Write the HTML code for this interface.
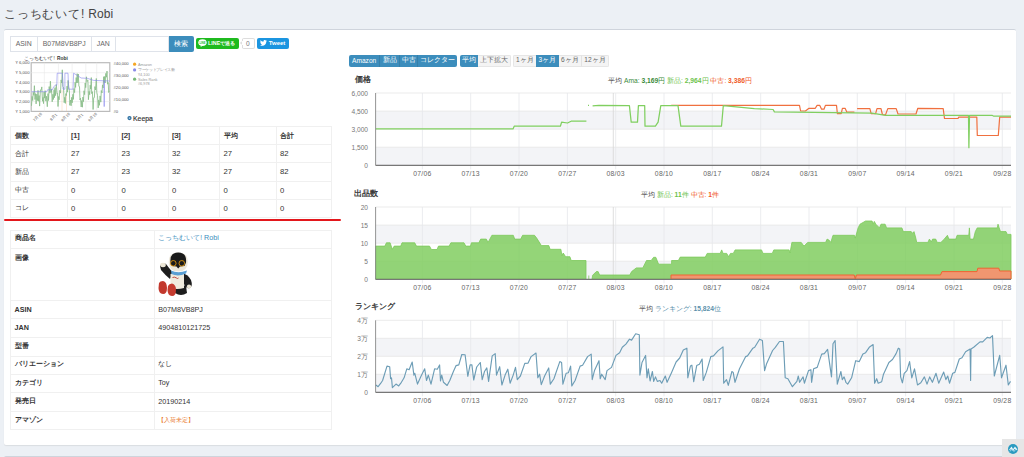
<!DOCTYPE html>
<html><head><meta charset="utf-8">
<style>
*{box-sizing:border-box}
html,body{margin:0;padding:0}
body{width:1024px;height:457px;overflow:hidden;position:relative;background:#ecf0f5;font-family:"Liberation Sans", sans-serif;color:#333}
.a{position:absolute}
.box{left:4px;top:28.8px;width:1012px;height:416.5px;background:#fff;border-top:1.4px solid #cfd4dc;border-radius:2px;box-shadow:0 1px 1px rgba(0,0,0,0.08)}
.ig{position:absolute;left:9.6px;top:35.6px;height:16.2px;display:flex;border:1px solid #dfe3ea;border-right:none;background:#fff}
.ig div{border-right:1px solid #dfe3ea;font-size:6.9px;color:#666;display:flex;align-items:center;justify-content:center;height:100%}
.btn{font-size:7px;display:flex;align-items:center;justify-content:center;white-space:nowrap}
.tb{border-collapse:collapse;position:absolute;font-size:7.7px;color:#333}
.j{font-size:6.6px}
.tb2{font-size:7.2px}
.tb2 td{padding-bottom:1.6px !important}
.tb td{border:1px solid #f0f0f0;padding:0 0 0 3.6px;vertical-align:middle;white-space:nowrap}
.bg{position:absolute;top:54.6px;height:12px;display:flex;border-radius:2px;overflow:hidden}
.bg div{font-size:6.6px;display:flex;align-items:center;justify-content:center;height:100%;white-space:nowrap}
.p{background:#3c8dbc;color:#fff;border-right:1px solid #367fa9}
.d{background:#f4f4f4;color:#666;border:1px solid #e6e6e6}
.ct{position:absolute;font-size:7.9px;font-weight:normal;color:#333;-webkit-text-stroke:0.3px #333;white-space:nowrap}
.sm{position:absolute;font-size:6.7px;color:#444;white-space:nowrap;text-align:center;left:580px;width:200px}
svg text{font-family:"Liberation Sans", sans-serif}
</style></head><body>
<div class="a" style="left:4.1px;top:6px;font-size:12px;color:#444;white-space:nowrap"><span style="letter-spacing:0.8px">こっちむいて!</span> Robi</div>
<div class="a box"></div>
<div class="a" style="left:4px;top:455.6px;width:1012px;height:10px;background:#fff;border-top:1.4px solid #cfd4dc;border-radius:2px"></div>
<div class="ig">
 <div style="width:27.2px">ASIN</div><div style="width:53.9px">B07M8VB8PJ</div><div style="width:24.3px">JAN</div><div style="width:53.2px"></div>
</div>
<div class="a btn" style="left:169px;top:35.6px;width:24.5px;height:16.2px;background:#3c8dbc;color:#fff;border-radius:0 2px 2px 0;font-size:7px">検索</div>
<div class="a btn" style="left:196px;top:38px;width:43px;height:10.5px;background:#1fba1f;color:#fff;border-radius:2px;font-size:5.4px;font-weight:bold;justify-content:flex-start;padding-left:1.8px"><svg width="9" height="8" viewBox="0 0 9 8" style="margin-right:1.2px"><ellipse cx="4.5" cy="3.6" rx="4.2" ry="3.4" fill="#fff"/><path d="M3 6.5 L2.6 8 L5 6.6Z" fill="#fff"/><text x="4.5" y="4.7" font-size="2.6" text-anchor="middle" fill="#1fba1f" font-weight="bold">LINE</text></svg>LINEで送る</div>
<div class="a" style="left:240.5px;top:40.8px;width:4px;height:4px;background:#fff;border-left:1px solid #ddd;border-bottom:1px solid #ddd;transform:rotate(45deg)"></div>
<div class="a btn" style="left:242px;top:38px;width:12.5px;height:10.5px;border:1px solid #ddd;border-left:none;border-radius:2px;color:#777;font-size:6.6px;background:#fff">0</div>
<div class="a" style="left:242px;top:38.5px;width:1px;height:2.5px;background:#ddd"></div>
<div class="a" style="left:242px;top:45px;width:1px;height:3px;background:#ddd"></div>
<div class="a btn" style="left:256.8px;top:38px;width:32px;height:10.6px;background:#1b95e0;color:#fff;border-radius:2px;font-size:6px;font-weight:bold"><svg width="7" height="6" viewBox="0 0 24 20" style="margin-right:1.5px"><path fill="#fff" d="M24 2.4c-.9.4-1.8.6-2.8.8 1-.6 1.8-1.6 2.2-2.7-1 .6-2 1-3.1 1.2C19.3.7 18 0 16.6 0c-2.7 0-4.9 2.2-4.9 4.9 0 .4 0 .8.1 1.1C7.7 5.8 4.1 3.9 1.7.9c-.4.7-.7 1.6-.7 2.5 0 1.7.9 3.2 2.2 4.1-.8 0-1.6-.2-2.2-.6v.1c0 2.4 1.7 4.4 3.9 4.8-.4.1-.8.2-1.3.2-.3 0-.6 0-.9-.1.6 2 2.4 3.4 4.6 3.4-1.7 1.3-3.8 2.1-6.1 2.1-.4 0-.8 0-1.2-.1 2.2 1.4 4.8 2.2 7.5 2.2 9.1 0 14-7.5 14-14v-.6c1-.7 1.8-1.6 2.5-2.5z"/></svg>Tweet</div>

<svg class="a" style="left:0;top:0" width="200" height="130" viewBox="0 0 200 130">
<rect x="31.2" y="62.7" width="78.6" height="48.7" fill="#fff" stroke="#bbb" stroke-width="1.2"/>
<line x1="31.2" y1="72.7" x2="109.8" y2="72.7" stroke="#e8e8e8" stroke-width="0.6"/>
<line x1="31.2" y1="82.6" x2="109.8" y2="82.6" stroke="#e8e8e8" stroke-width="0.6"/>
<line x1="31.2" y1="91.9" x2="109.8" y2="91.9" stroke="#e8e8e8" stroke-width="0.6"/>
<line x1="31.2" y1="101.6" x2="109.8" y2="101.6" stroke="#e8e8e8" stroke-width="0.6"/>
<line x1="44.3" y1="62.7" x2="44.3" y2="111.4" stroke="#e8e8e8" stroke-width="0.6"/>
<line x1="58.4" y1="62.7" x2="58.4" y2="111.4" stroke="#e8e8e8" stroke-width="0.6"/>
<line x1="72.1" y1="62.7" x2="72.1" y2="111.4" stroke="#e8e8e8" stroke-width="0.6"/>
<line x1="85.8" y1="62.7" x2="85.8" y2="111.4" stroke="#e8e8e8" stroke-width="0.6"/>
<line x1="96.7" y1="62.7" x2="96.7" y2="111.4" stroke="#e8e8e8" stroke-width="0.6"/>
<polyline points="31.5,105.8 32.1,96.4 32.7,100.5 33.2,92.3 33.9,95.3 34.4,85.7 35.0,99.5 35.6,93.6 36.1,103.9 36.8,94.1 37.5,100.6 38.0,90.4 38.6,101.2 39.1,95.6 39.6,106.1 40.4,89.9 41.1,90.5 41.8,86.9 42.5,101.2 43.0,97.4 43.5,103.6 44.1,92.0 44.6,98.1 45.2,90.7 45.8,101.1 46.5,96.3 47.3,106.7 48.0,93.6 48.5,100.5 49.2,86.6 49.9,93.2 50.4,81.2 51.0,92.3 51.5,89.4 52.2,101.8 52.9,94.3 53.4,99.5 54.1,89.7 54.5,97.6 55.0,87.6 55.6,95.6 56.3,84.6 57.1,93.7 57.5,93.2 58.0,106.5 58.6,96.5 59.1,99.8 59.8,90.3 60.5,93.1 61.1,79.9 61.7,83.0 62.3,69.8 62.9,86.6 63.5,87.1 64.2,102.7 64.7,97.3 65.4,103.4 65.8,93.6 66.4,95.8 67.1,86.1 67.5,92.1 68.1,80.4 68.7,86.3 69.4,90.8 69.8,105.3 70.6,100.0 71.1,105.8 71.7,97.3 72.2,102.8 72.9,94.3 73.4,99.4 73.9,88.6 74.6,92.6 75.1,82.3 75.6,87.4 76.2,77.6 76.7,83.0 77.2,73.7 77.8,82.8 78.3,74.0 78.9,86.4 79.5,86.6 80.0,100.0 80.5,98.2 81.2,107.0 81.7,100.5 82.4,107.2 82.9,97.1 83.5,101.6 84.0,90.8 84.6,94.6 85.2,83.0 85.7,87.6 86.4,76.8 87.1,81.6 87.9,80.2 88.4,99.7 89.1,91.4 89.7,94.7 90.2,85.2 90.7,89.0 91.3,77.6 91.7,93.6 92.4,91.7 93.1,109.5 93.7,97.7 94.4,97.5 94.9,86.6 95.5,90.0 96.3,78.5 96.8,92.6 97.5,95.3 98.2,107.9 98.7,99.9 99.4,105.3 100.1,95.9 100.8,102.1 101.3,90.5 102.0,93.0 102.5,84.9 103.1,88.0 103.7,76.7 104.1,82.4 104.6,76.5 105.1,83.0 105.8,73.4 106.4,77.2 107.0,71.1 107.6,84.2 108.2,82.5 108.7,92.5 109.3,90.9" fill="none" stroke="#8abd8a" stroke-width="1.0" opacity="0.85"/>
<line x1="62" y1="90" x2="62" y2="111" stroke="#f8c89a" stroke-width="0.4"/><line x1="66.5" y1="95" x2="66.5" y2="111" stroke="#f8c89a" stroke-width="0.4"/>
<polyline points="31.5,91.7 46.8,91.7 47.5,89.8 52.4,89.8 53.7,86.7 55.5,85.2 56.8,85.2 57.2,73.2 62.4,73.2 63.0,89.2 64.9,89.2 64.9,73.2 68.0,73.2 68.6,89.2 73.0,89.2 73.6,73.2 77.4,75.5 81.1,78.0 87.3,78.3 93.6,80.4 104.0,80.8 104.2,106.6 104.5,80.8 109.5,81.0" fill="none" stroke="#8585ec" stroke-width="0.8" opacity="0.75"/>
<text x="23.7" y="59.6" font-size="4.5" fill="#333" textLength="31" lengthAdjust="spacing">こっちむいて!</text><text x="57" y="59.6" font-size="4.7" fill="#333" font-weight="bold" textLength="10.8" lengthAdjust="spacingAndGlyphs">Robi</text>
<text x="29.5" y="64.2" text-anchor="end" font-size="4.2" fill="#555">¥ 6,000</text>
<text x="29.5" y="74.2" text-anchor="end" font-size="4.2" fill="#555">¥ 5,000</text>
<text x="29.5" y="84.1" text-anchor="end" font-size="4.2" fill="#555">¥ 4,000</text>
<text x="29.5" y="93.4" text-anchor="end" font-size="4.2" fill="#555">¥ 3,000</text>
<text x="29.5" y="103.1" text-anchor="end" font-size="4.2" fill="#555">¥ 2,000</text>
<text x="29.5" y="112.9" text-anchor="end" font-size="4.2" fill="#555">¥ 1,000</text>
<text x="113.5" y="64.5" font-size="4.2" fill="#555">#40,000</text>
<text x="113.5" y="76.5" font-size="4.2" fill="#555">#30,000</text>
<text x="113.5" y="88.5" font-size="4.2" fill="#555">#20,000</text>
<text x="113.5" y="100.8" font-size="4.2" fill="#555">#10,000</text>
<text x="113.5" y="112.8" font-size="4.2" fill="#555">#0</text>
<circle cx="134.6" cy="64.2" r="1.6" fill="#f5a623"/>
<circle cx="134.6" cy="69.9" r="1.6" fill="#8a8ae8"/>
<circle cx="134.6" cy="79.2" r="1.6" fill="#7ab87a"/>
<text x="138" y="65.6" font-size="3.8" fill="#999">Amazon</text>
<text x="138" y="71.3" font-size="3.6" fill="#999" textLength="37" lengthAdjust="spacing">マーケットプレイス新</text>
<text x="138" y="75.6" font-size="3.8" fill="#999">¥4,100</text>
<text x="138" y="80.6" font-size="3.8" fill="#999">Sales Rank</text>
<text x="138" y="85.2" font-size="3.8" fill="#999">#6,978</text>
<text x="38.5" y="118" font-size="3.8" fill="#555" text-anchor="middle" transform="rotate(-45 38.5 118)">7月16</text>
<text x="54.5" y="118" font-size="3.8" fill="#555" text-anchor="middle" transform="rotate(-45 54.5 118)">8月1</text>
<text x="66.5" y="118" font-size="3.8" fill="#555" text-anchor="middle" transform="rotate(-45 66.5 118)">8月16</text>
<text x="80.5" y="118" font-size="3.8" fill="#555" text-anchor="middle" transform="rotate(-45 80.5 118)">9月1</text>
<text x="93.5" y="118" font-size="3.8" fill="#555" text-anchor="middle" transform="rotate(-45 93.5 118)">9月16</text>
<circle cx="129.5" cy="118.1" r="2.1" fill="#2b6d9e"/><circle cx="129.5" cy="118.1" r="0.9" fill="#9cc6e6"/>
<text x="133" y="120.6" font-size="6.9" fill="#333" stroke="#333" stroke-width="0.15">Keepa</text>
</svg>

<table class="tb" style="left:10px;top:126px;width:322px;height:92px">
<tr style="color:#222;-webkit-text-stroke:0.2px #222"><td style="width:56.5px"><span class="j">個数</span></td><td style="width:50.5px">[1]</td><td style="width:50.5px">[2]</td><td style="width:51.5px">[3]</td><td style="width:56.5px"><span class="j">平均</span></td><td><span class="j">合計</span></td></tr>
<tr><td><span class="j">合計</span></td><td>27</td><td>23</td><td>32</td><td>27</td><td>82</td></tr>
<tr><td><span class="j">新品</span></td><td>27</td><td>23</td><td>32</td><td>27</td><td>82</td></tr>
<tr><td><span class="j">中古</span></td><td>0</td><td>0</td><td>0</td><td>0</td><td>0</td></tr>
<tr><td><span class="j">コレ</span></td><td>0</td><td>0</td><td>0</td><td>0</td><td>0</td></tr>
</table>
<div class="a" style="left:3.5px;top:219px;width:337px;height:2.4px;background:#e3171c;border-radius:2px"></div>

<table class="tb tb2" style="left:10px;top:229.5px;width:322px">
<tr style="height:18.5px"><td style="width:143.6px;font-weight:bold"><span class="j">商品名</span></td><td style="color:#3c8dbc"><span class="j">こっちむいて!</span> Robi</td></tr>
<tr style="height:52.3px"><td style="font-weight:bold;vertical-align:top;padding-top:4px"><span class="j">画像</span></td><td></td></tr>
<tr style="height:18.1px"><td style="font-weight:bold">ASIN</td><td>B07M8VB8PJ</td></tr>
<tr style="height:18.3px"><td style="font-weight:bold">JAN</td><td>4904810121725</td></tr>
<tr style="height:18.9px"><td style="font-weight:bold"><span class="j">型番</span></td><td></td></tr>
<tr style="height:18.4px"><td style="font-weight:bold"><span class="j">バリエーション</span></td><td><span class="j">なし</span></td></tr>
<tr style="height:18.5px"><td style="font-weight:bold"><span class="j">カテゴリ</span></td><td>Toy</td></tr>
<tr style="height:18.4px"><td style="font-weight:bold"><span class="j">発売日</span></td><td>20190214</td></tr>
<tr style="height:18.4px"><td style="font-weight:bold"><span class="j">アマゾン</span></td><td style="color:#e8731e"><span class="j" style="font-size:6.2px">【入荷未定】</span></td></tr>
</table>
<svg class="a" style="left:155px;top:248px" width="42" height="50" viewBox="155 248 42 50">
<path d="M181 273 Q188 274 191 280 Q193 286 190 288 Q186 289 184 284 Z" fill="#1d1d1d"/>
<ellipse cx="189" cy="286.5" rx="2.2" ry="2" fill="#ece6d6"/>
<path d="M160 266 Q162 262 166 264 L173 273 L170 279 Q166 276 161 270 Z" fill="#1d1d1d"/>
<ellipse cx="163" cy="265" rx="2.8" ry="2.2" fill="#ece6d6"/>
<path d="M174 285 Q180 283 186 286 L187 293 Q181 297 175 293 Z" fill="#1d1d1d"/>
<path d="M170.5 274 Q177 271 184 274 L184 288 Q177 290 170.5 288 Z" fill="#f0ebde"/>
<path d="M171 270.5 Q178 274 187 270.5 L186 273.5 Q178 277 171.5 274 Z" fill="#5a9fd3"/>
<path d="M172.5 277.5 q2 -1 4 0.5 q1 1 2 0" stroke="#b8352c" stroke-width="0.9" fill="none"/>
<path d="M168.7 262 Q168.7 252.4 178.2 252.4 Q187.8 252.4 187.8 262 Q187.8 271.5 178.2 271.5 Q168.7 271.5 168.7 262 Z" fill="#ece7da"/>
<path d="M170.5 262.5 Q169.5 252.4 178.2 252.4 Q187 252.4 186 262.5 L184.5 266 L180 266.5 L178.2 268.5 L176.5 266.5 L172 266 Z" fill="#1a1a1a"/>
<circle cx="173.3" cy="263.3" r="2.8" fill="#1a1a1a" stroke="#f2a20e" stroke-width="0.8"/>
<circle cx="181.8" cy="263.3" r="2.8" fill="#1a1a1a" stroke="#f2a20e" stroke-width="0.8"/>
<path d="M159 283 Q160 281 163 281 Q167 282 167 288 Q167 294 163 294 Q158.5 293.5 158.5 288 Z" fill="#c2382d"/>
<path d="M168 286 Q169 283.5 172 283.5 Q176 284.5 176 290 Q176 296 172 296 Q167.5 295.5 167.5 290 Z" fill="#c53b2f"/>
</svg>

<div class="bg" style="left:349px;width:108px">
 <div class="p" style="width:31.3px">Amazon</div><div class="p" style="width:19.5px">新品</div><div class="p" style="width:18.6px">中古</div><div class="p" style="width:38.6px;border-right:none">コレクター</div>
</div>
<div class="bg" style="left:459.5px;width:51.1px">
 <div class="p" style="width:18.6px;border-right:none">平均</div><div class="d" style="width:32.5px;border-left:none">上下拡大</div>
</div>
<div class="bg" style="left:513.3px;width:95.6px">
 <div class="d" style="width:22.3px;border-right:none">1ヶ月</div><div class="p" style="width:23.3px;border-right:none">3ヶ月</div><div class="d" style="width:22.1px;border-right:none;border-left:none">6ヶ月</div><div class="d" style="width:27.9px;border-left:1px solid #e2e2e2">12ヶ月</div>
</div>

<div class="ct" style="left:354.8px;top:74px">価格</div>
<div class="ct" style="left:354.2px;top:187.6px">出品数</div>
<div class="ct" style="left:354.8px;top:301.2px">ランキング</div>
<div class="sm" style="top:77px">平均 <span style="color:#3a8a3a">Ama: <b>3,169</b>円</span> <span style="color:#6cc24a">新品: <b>2,964</b>円</span> <span style="color:#f05a28">中古: <b>3,386</b>円</span></div>
<div class="sm" style="top:191px">平均 <span style="color:#6cc24a">新品: <b>11</b>件</span> <span style="color:#f05a28">中古: <b>1</b>件</span></div>
<div class="sm" style="top:304.6px">平均 <span style="color:#5b90ab">ランキング: <b>15,824</b>位</span></div>

<svg class="a" style="left:0;top:0" width="1024" height="457" viewBox="0 0 1024 457">
<rect x="375.6" y="111.1" width="635.4" height="18.05000000000001" fill="#f3f4f7"/>
<rect x="375.6" y="147.2" width="635.4" height="18.100000000000023" fill="#f3f4f7"/>
<line x1="375.6" y1="93.0" x2="1011.0" y2="93.0" stroke="#e6e6e6" stroke-width="0.8"/>
<text x="368" y="95.8" text-anchor="end" font-size="6.6" fill="#777">6,000</text>
<line x1="375.6" y1="111.1" x2="1011.0" y2="111.1" stroke="#e6e6e6" stroke-width="0.8"/>
<text x="368" y="113.9" text-anchor="end" font-size="6.6" fill="#777">4,500</text>
<line x1="375.6" y1="129.2" x2="1011.0" y2="129.2" stroke="#e6e6e6" stroke-width="0.8"/>
<text x="368" y="132.0" text-anchor="end" font-size="6.6" fill="#777">3,000</text>
<line x1="375.6" y1="147.2" x2="1011.0" y2="147.2" stroke="#e6e6e6" stroke-width="0.8"/>
<text x="368" y="150.0" text-anchor="end" font-size="6.6" fill="#777">1,500</text>
<line x1="375.6" y1="165.3" x2="1011.0" y2="165.3" stroke="#e6e6e6" stroke-width="0.8"/>
<text x="368" y="168.1" text-anchor="end" font-size="6.6" fill="#777">0</text>
<line x1="422.4" y1="93.0" x2="422.4" y2="169.3" stroke="#e6e7eb" stroke-width="0.8"/>
<text x="422.4" y="175.8" text-anchor="middle" font-size="6.8" fill="#666" letter-spacing="0.25">07/06</text>
<line x1="470.7" y1="93.0" x2="470.7" y2="169.3" stroke="#e6e7eb" stroke-width="0.8"/>
<text x="470.7" y="175.8" text-anchor="middle" font-size="6.8" fill="#666" letter-spacing="0.25">07/13</text>
<line x1="519.0" y1="93.0" x2="519.0" y2="169.3" stroke="#e6e7eb" stroke-width="0.8"/>
<text x="519.0" y="175.8" text-anchor="middle" font-size="6.8" fill="#666" letter-spacing="0.25">07/20</text>
<line x1="567.4" y1="93.0" x2="567.4" y2="169.3" stroke="#e6e7eb" stroke-width="0.8"/>
<text x="567.4" y="175.8" text-anchor="middle" font-size="6.8" fill="#666" letter-spacing="0.25">07/27</text>
<line x1="615.7" y1="93.0" x2="615.7" y2="169.3" stroke="#e6e7eb" stroke-width="0.8"/>
<text x="615.7" y="175.8" text-anchor="middle" font-size="6.8" fill="#666" letter-spacing="0.25">08/03</text>
<line x1="664.0" y1="93.0" x2="664.0" y2="169.3" stroke="#e6e7eb" stroke-width="0.8"/>
<text x="664.0" y="175.8" text-anchor="middle" font-size="6.8" fill="#666" letter-spacing="0.25">08/10</text>
<line x1="712.3" y1="93.0" x2="712.3" y2="169.3" stroke="#e6e7eb" stroke-width="0.8"/>
<text x="712.3" y="175.8" text-anchor="middle" font-size="6.8" fill="#666" letter-spacing="0.25">08/17</text>
<line x1="760.7" y1="93.0" x2="760.7" y2="169.3" stroke="#e6e7eb" stroke-width="0.8"/>
<text x="760.7" y="175.8" text-anchor="middle" font-size="6.8" fill="#666" letter-spacing="0.25">08/24</text>
<line x1="809.0" y1="93.0" x2="809.0" y2="169.3" stroke="#e6e7eb" stroke-width="0.8"/>
<text x="809.0" y="175.8" text-anchor="middle" font-size="6.8" fill="#666" letter-spacing="0.25">08/31</text>
<line x1="857.3" y1="93.0" x2="857.3" y2="169.3" stroke="#e6e7eb" stroke-width="0.8"/>
<text x="857.3" y="175.8" text-anchor="middle" font-size="6.8" fill="#666" letter-spacing="0.25">09/07</text>
<line x1="905.6" y1="93.0" x2="905.6" y2="169.3" stroke="#e6e7eb" stroke-width="0.8"/>
<text x="905.6" y="175.8" text-anchor="middle" font-size="6.8" fill="#666" letter-spacing="0.25">09/14</text>
<line x1="954.0" y1="93.0" x2="954.0" y2="169.3" stroke="#e6e7eb" stroke-width="0.8"/>
<text x="954.0" y="175.8" text-anchor="middle" font-size="6.8" fill="#666" letter-spacing="0.25">09/21</text>
<line x1="1002.3" y1="93.0" x2="1002.3" y2="169.3" stroke="#e6e7eb" stroke-width="0.8"/>
<text x="1002.3" y="175.8" text-anchor="middle" font-size="6.8" fill="#666" letter-spacing="0.25">09/28</text>
<line x1="613.3" y1="93.0" x2="613.3" y2="165.3" stroke="#d6d6d6" stroke-width="0.8"/>
<polyline points="671.2,105.4 799.5,105.4 800.6,111.0 805.4,111.0 809.0,108.3 815.3,108.3 817.1,105.4 819.8,105.4 821.6,109.2 824.0,109.2 825.4,105.4 836.5,105.4 837.4,113.7 841.2,113.7 842.4,108.3 845.1,108.3 846.9,112.2 854.4,112.2" fill="none" stroke="#f0703f" stroke-width="1.2" stroke-linejoin="round"/>
<polyline points="857.1,108.6 869.9,108.6 871.1,113.7 875.6,113.7 877.0,108.6 881.0,108.6 882.4,114.5 885.5,114.9 887.8,108.6 896.2,108.6 898.0,114.0 916.0,114.0 917.8,108.3 943.2,108.6 944.5,118.5 958.0,118.5 958.8,117.1 976.8,117.1 977.3,135.5 998.3,135.5 999.7,117.1 1011.0,117.1" fill="none" stroke="#f0703f" stroke-width="1.2" stroke-linejoin="round"/>
<polyline points="375.6,128.9 513.0,128.9 514.2,126.2 560.4,126.2 561.6,122.1 567.5,123.0 571.1,121.2 586.4,121.2" fill="none" stroke="#80cf60" stroke-width="1.25" stroke-linejoin="round"/>
<polyline points="588.0,105.4 589.0,105.4" fill="none" stroke="#80cf60" stroke-width="1.25" stroke-linejoin="round"/>
<polyline points="592.6,105.9 598.9,105.4 629.4,105.6 631.2,122.1 637.5,122.1 638.4,105.6 644.7,105.6 645.0,126.2 655.4,126.2 658.1,122.1 660.8,105.6 678.0,105.6 680.8,126.2 721.5,126.2 723.3,105.6 754.3,108.6 773.1,109.5 774.4,111.9 872.0,113.1 885.5,115.3 968.5,115.3 968.9,147.7 969.5,115.3 992.0,115.3 993.8,116.2 1011.0,116.2" fill="none" stroke="#80cf60" stroke-width="1.25" stroke-linejoin="round"/>
<line x1="375.6" y1="93.0" x2="375.6" y2="165.3" stroke="#888" stroke-width="0.9"/>
<line x1="375.6" y1="165.3" x2="1011.0" y2="165.3" stroke="#777" stroke-width="1.3"/>
<rect x="375.6" y="225.1" width="635.4" height="18.05000000000001" fill="#f3f4f7"/>
<rect x="375.6" y="261.2" width="635.4" height="18.100000000000023" fill="#f3f4f7"/>
<line x1="375.6" y1="207.0" x2="1011.0" y2="207.0" stroke="#e6e6e6" stroke-width="0.8"/>
<text x="368" y="209.8" text-anchor="end" font-size="6.6" fill="#777">20</text>
<line x1="375.6" y1="225.1" x2="1011.0" y2="225.1" stroke="#e6e6e6" stroke-width="0.8"/>
<text x="368" y="227.9" text-anchor="end" font-size="6.6" fill="#777">15</text>
<line x1="375.6" y1="243.2" x2="1011.0" y2="243.2" stroke="#e6e6e6" stroke-width="0.8"/>
<text x="368" y="246.0" text-anchor="end" font-size="6.6" fill="#777">10</text>
<line x1="375.6" y1="261.2" x2="1011.0" y2="261.2" stroke="#e6e6e6" stroke-width="0.8"/>
<text x="368" y="264.0" text-anchor="end" font-size="6.6" fill="#777">5</text>
<line x1="375.6" y1="279.3" x2="1011.0" y2="279.3" stroke="#e6e6e6" stroke-width="0.8"/>
<text x="368" y="282.1" text-anchor="end" font-size="6.6" fill="#777">0</text>
<line x1="422.4" y1="207.0" x2="422.4" y2="283.3" stroke="#e6e7eb" stroke-width="0.8"/>
<text x="422.4" y="289.8" text-anchor="middle" font-size="6.8" fill="#666" letter-spacing="0.25">07/06</text>
<line x1="470.7" y1="207.0" x2="470.7" y2="283.3" stroke="#e6e7eb" stroke-width="0.8"/>
<text x="470.7" y="289.8" text-anchor="middle" font-size="6.8" fill="#666" letter-spacing="0.25">07/13</text>
<line x1="519.0" y1="207.0" x2="519.0" y2="283.3" stroke="#e6e7eb" stroke-width="0.8"/>
<text x="519.0" y="289.8" text-anchor="middle" font-size="6.8" fill="#666" letter-spacing="0.25">07/20</text>
<line x1="567.4" y1="207.0" x2="567.4" y2="283.3" stroke="#e6e7eb" stroke-width="0.8"/>
<text x="567.4" y="289.8" text-anchor="middle" font-size="6.8" fill="#666" letter-spacing="0.25">07/27</text>
<line x1="615.7" y1="207.0" x2="615.7" y2="283.3" stroke="#e6e7eb" stroke-width="0.8"/>
<text x="615.7" y="289.8" text-anchor="middle" font-size="6.8" fill="#666" letter-spacing="0.25">08/03</text>
<line x1="664.0" y1="207.0" x2="664.0" y2="283.3" stroke="#e6e7eb" stroke-width="0.8"/>
<text x="664.0" y="289.8" text-anchor="middle" font-size="6.8" fill="#666" letter-spacing="0.25">08/10</text>
<line x1="712.3" y1="207.0" x2="712.3" y2="283.3" stroke="#e6e7eb" stroke-width="0.8"/>
<text x="712.3" y="289.8" text-anchor="middle" font-size="6.8" fill="#666" letter-spacing="0.25">08/17</text>
<line x1="760.7" y1="207.0" x2="760.7" y2="283.3" stroke="#e6e7eb" stroke-width="0.8"/>
<text x="760.7" y="289.8" text-anchor="middle" font-size="6.8" fill="#666" letter-spacing="0.25">08/24</text>
<line x1="809.0" y1="207.0" x2="809.0" y2="283.3" stroke="#e6e7eb" stroke-width="0.8"/>
<text x="809.0" y="289.8" text-anchor="middle" font-size="6.8" fill="#666" letter-spacing="0.25">08/31</text>
<line x1="857.3" y1="207.0" x2="857.3" y2="283.3" stroke="#e6e7eb" stroke-width="0.8"/>
<text x="857.3" y="289.8" text-anchor="middle" font-size="6.8" fill="#666" letter-spacing="0.25">09/07</text>
<line x1="905.6" y1="207.0" x2="905.6" y2="283.3" stroke="#e6e7eb" stroke-width="0.8"/>
<text x="905.6" y="289.8" text-anchor="middle" font-size="6.8" fill="#666" letter-spacing="0.25">09/14</text>
<line x1="954.0" y1="207.0" x2="954.0" y2="283.3" stroke="#e6e7eb" stroke-width="0.8"/>
<text x="954.0" y="289.8" text-anchor="middle" font-size="6.8" fill="#666" letter-spacing="0.25">09/21</text>
<line x1="1002.3" y1="207.0" x2="1002.3" y2="283.3" stroke="#e6e7eb" stroke-width="0.8"/>
<text x="1002.3" y="289.8" text-anchor="middle" font-size="6.8" fill="#666" letter-spacing="0.25">09/28</text>
<line x1="613.3" y1="207.0" x2="613.3" y2="279.3" stroke="#d6d6d6" stroke-width="0.8"/>
<polygon points="375.6,246.1 384.9,246.1 386.4,242.8 390.1,242.8 392.3,249.3 394.2,246.1 400.7,246.1 402.0,242.8 414.7,242.8 416.5,246.1 429.5,246.1 431.4,249.5 437.0,249.5 438.5,246.1 449.1,246.1 450.9,242.8 464.0,242.8 465.8,246.1 470.5,246.1 471.4,242.8 478.8,242.8 480.7,239.1 486.3,239.1 488.1,242.4 491.9,235.3 513.3,235.3 514.7,239.1 520.7,239.1 522.6,235.3 534.5,235.3 536.7,238.1 541.4,245.6 548.8,245.6 550.1,249.3 560.9,249.3 561.9,255.8 563.2,253.0 565.6,256.7 569.9,256.7 571.2,260.5 586.0,260.5 586.0,279.1 375.6,279.1" fill="#7ccc5a" fill-opacity="0.82" stroke="#7cc95a" stroke-width="0.8"/>
<polygon points="592.0,279.1 592.6,275.3 596.3,271.6 598.1,271.6 599.6,275.0 629.8,275.0 631.6,271.6 636.3,267.9 642.8,267.9 646.5,260.5 651.2,260.5 653.6,257.3 655.8,257.3 658.6,264.2 671.6,264.2 671.6,260.5 678.4,260.5 680.2,257.1 705.3,257.1 707.2,253.4 720.2,253.4 721.7,249.9 723.0,253.4 726.7,253.4 728.6,256.7 730.5,253.4 733.3,253.4 735.1,249.9 761.5,249.9 763.0,253.4 772.3,253.4 773.8,249.9 789.1,249.9 790.0,253.0 791.9,242.4 801.2,242.4 804.0,246.1 807.7,242.4 825.6,242.4 827.1,239.1 828.9,240.0 830.8,242.4 833.0,235.3 854.4,235.3 855.3,238.1 858.1,227.9 860.0,224.2 865.6,221.0 872.1,221.0 873.0,224.2 874.3,221.4 875.8,224.2 879.5,227.9 881.0,224.2 885.1,224.2 886.6,227.9 901.9,227.9 903.3,231.6 911.2,231.6 913.0,233.5 914.0,231.6 915.8,238.1 916.7,242.4 927.9,242.4 929.4,239.1 931.3,241.9 932.6,239.1 935.7,239.1 937.2,242.4 940.9,242.4 944.3,239.1 947.4,235.3 948.9,239.1 955.8,239.1 957.1,235.3 968.8,235.3 969.4,227.9 970.1,239.1 973.5,239.1 975.3,231.6 977.2,227.9 997.3,227.9 998.0,224.2 999.2,227.9 1000.5,231.6 1006.0,231.6 1007.3,234.4 1011.0,234.4 1011.0,279.1" fill="#7ccc5a" fill-opacity="0.82" stroke="#7cc95a" stroke-width="0.8"/>
<line x1="588.8" y1="275.5" x2="588.8" y2="279" stroke="#7cc95a" stroke-width="0.8"/>
<polygon points="671.0,279.1 671.0,275.0 854.2,275.0 855.3,279.0 856.4,275.0 940.5,275.0 942.0,271.6 977.0,271.6 977.8,268.2 998.8,268.2 999.6,271.0 1011.0,271.0 1011.0,279.1" fill="#f39470" fill-opacity="0.97" stroke="#f06432" stroke-width="1.0"/>
<line x1="375.6" y1="207.0" x2="375.6" y2="279.3" stroke="#888" stroke-width="0.9"/>
<line x1="375.6" y1="279.3" x2="1011.0" y2="279.3" stroke="#777" stroke-width="1.3"/>
<rect x="375.6" y="338.3" width="635.4" height="18.0" fill="#f3f4f7"/>
<rect x="375.6" y="374.3" width="635.4" height="18.0" fill="#f3f4f7"/>
<line x1="375.6" y1="320.3" x2="1011.0" y2="320.3" stroke="#e6e6e6" stroke-width="0.8"/>
<text x="368" y="323.1" text-anchor="end" font-size="6.6" fill="#777">4万</text>
<line x1="375.6" y1="338.3" x2="1011.0" y2="338.3" stroke="#e6e6e6" stroke-width="0.8"/>
<text x="368" y="341.1" text-anchor="end" font-size="6.6" fill="#777">3万</text>
<line x1="375.6" y1="356.3" x2="1011.0" y2="356.3" stroke="#e6e6e6" stroke-width="0.8"/>
<text x="368" y="359.1" text-anchor="end" font-size="6.6" fill="#777">2万</text>
<line x1="375.6" y1="374.3" x2="1011.0" y2="374.3" stroke="#e6e6e6" stroke-width="0.8"/>
<text x="368" y="377.1" text-anchor="end" font-size="6.6" fill="#777">1万</text>
<line x1="375.6" y1="392.3" x2="1011.0" y2="392.3" stroke="#e6e6e6" stroke-width="0.8"/>
<text x="368" y="395.1" text-anchor="end" font-size="6.6" fill="#777">0</text>
<line x1="422.4" y1="320.3" x2="422.4" y2="396.3" stroke="#e6e7eb" stroke-width="0.8"/>
<text x="422.4" y="402.8" text-anchor="middle" font-size="6.8" fill="#666" letter-spacing="0.25">07/06</text>
<line x1="470.7" y1="320.3" x2="470.7" y2="396.3" stroke="#e6e7eb" stroke-width="0.8"/>
<text x="470.7" y="402.8" text-anchor="middle" font-size="6.8" fill="#666" letter-spacing="0.25">07/13</text>
<line x1="519.0" y1="320.3" x2="519.0" y2="396.3" stroke="#e6e7eb" stroke-width="0.8"/>
<text x="519.0" y="402.8" text-anchor="middle" font-size="6.8" fill="#666" letter-spacing="0.25">07/20</text>
<line x1="567.4" y1="320.3" x2="567.4" y2="396.3" stroke="#e6e7eb" stroke-width="0.8"/>
<text x="567.4" y="402.8" text-anchor="middle" font-size="6.8" fill="#666" letter-spacing="0.25">07/27</text>
<line x1="615.7" y1="320.3" x2="615.7" y2="396.3" stroke="#e6e7eb" stroke-width="0.8"/>
<text x="615.7" y="402.8" text-anchor="middle" font-size="6.8" fill="#666" letter-spacing="0.25">08/03</text>
<line x1="664.0" y1="320.3" x2="664.0" y2="396.3" stroke="#e6e7eb" stroke-width="0.8"/>
<text x="664.0" y="402.8" text-anchor="middle" font-size="6.8" fill="#666" letter-spacing="0.25">08/10</text>
<line x1="712.3" y1="320.3" x2="712.3" y2="396.3" stroke="#e6e7eb" stroke-width="0.8"/>
<text x="712.3" y="402.8" text-anchor="middle" font-size="6.8" fill="#666" letter-spacing="0.25">08/17</text>
<line x1="760.7" y1="320.3" x2="760.7" y2="396.3" stroke="#e6e7eb" stroke-width="0.8"/>
<text x="760.7" y="402.8" text-anchor="middle" font-size="6.8" fill="#666" letter-spacing="0.25">08/24</text>
<line x1="809.0" y1="320.3" x2="809.0" y2="396.3" stroke="#e6e7eb" stroke-width="0.8"/>
<text x="809.0" y="402.8" text-anchor="middle" font-size="6.8" fill="#666" letter-spacing="0.25">08/31</text>
<line x1="857.3" y1="320.3" x2="857.3" y2="396.3" stroke="#e6e7eb" stroke-width="0.8"/>
<text x="857.3" y="402.8" text-anchor="middle" font-size="6.8" fill="#666" letter-spacing="0.25">09/07</text>
<line x1="905.6" y1="320.3" x2="905.6" y2="396.3" stroke="#e6e7eb" stroke-width="0.8"/>
<text x="905.6" y="402.8" text-anchor="middle" font-size="6.8" fill="#666" letter-spacing="0.25">09/14</text>
<line x1="954.0" y1="320.3" x2="954.0" y2="396.3" stroke="#e6e7eb" stroke-width="0.8"/>
<text x="954.0" y="402.8" text-anchor="middle" font-size="6.8" fill="#666" letter-spacing="0.25">09/21</text>
<line x1="1002.3" y1="320.3" x2="1002.3" y2="396.3" stroke="#e6e7eb" stroke-width="0.8"/>
<text x="1002.3" y="402.8" text-anchor="middle" font-size="6.8" fill="#666" letter-spacing="0.25">09/28</text>
<line x1="613.3" y1="320.3" x2="613.3" y2="392.3" stroke="#d6d6d6" stroke-width="0.8"/>
<polyline points="375.9,385.0 378.1,386.7 380.8,383.2 382.6,380.5 387.0,366.1 389.7,366.7 390.6,378.7 391.5,377.8 392.4,387.6 396.0,384.1 398.7,385.9 401.4,382.3 404.1,377.8 406.8,368.8 409.1,369.7 412.2,362.0 413.9,375.1 414.8,373.3 417.5,384.1 421.1,376.0 424.7,368.8 426.5,380.5 428.3,375.1 431.0,384.1 434.6,368.8 437.3,369.2 439.6,364.9 440.5,381.0 441.7,375.1 443.5,382.3 447.1,385.5 449.8,380.5 453.4,371.5 456.1,365.6 458.8,364.9 461.8,354.5 465.1,354.8 467.8,376.3 470.1,364.9 471.9,364.9 473.7,380.0 476.7,367.0 480.3,362.5 482.2,379.6 484.5,371.5 486.8,367.9 488.6,381.4 492.2,355.9 495.2,353.6 496.5,375.1 499.7,366.7 501.9,385.0 505.1,375.1 507.8,369.2 510.1,383.2 513.2,375.1 515.5,367.4 517.3,379.6 520.4,376.0 524.8,363.4 528.1,363.1 531.1,356.6 536.0,353.0 537.8,377.8 539.6,374.2 541.3,384.6 544.6,376.0 548.7,367.9 550.3,384.1 553.9,378.7 559.8,361.6 561.6,362.5 562.9,384.1 566.1,373.3 568.4,372.8 570.6,366.1 571.8,385.9 575.1,380.5 580.1,366.1 582.6,365.2 587.6,356.6 591.2,354.1 592.2,379.6 594.5,370.6 599.0,360.7 600.2,378.7 601.7,374.2 605.2,379.6 607.0,370.6 611.5,367.4 616.0,355.4 619.6,352.7 622.3,347.3 625.9,344.1 629.5,339.2 631.6,340.1 635.7,333.8 639.3,334.7 639.9,375.1 642.0,362.5 645.6,355.4 647.0,377.8 648.3,368.8 650.1,381.0 652.4,371.5 653.7,381.4 655.5,376.9 657.3,381.4 660.0,380.5 661.7,383.2 665.3,376.0 667.1,382.3 671.6,372.4 676.1,362.0 679.7,358.0 683.3,350.0 686.9,348.2 687.8,377.8 690.4,366.1 691.9,365.2 693.7,381.7 696.7,365.6 699.4,364.3 702.1,359.0 703.2,380.5 706.3,372.4 710.8,356.6 713.5,355.9 717.9,350.9 723.0,346.9 723.7,383.2 726.5,379.6 728.3,385.3 731.9,371.5 733.2,372.4 735.0,382.3 739.5,368.8 745.7,356.6 747.5,355.9 752.9,348.2 754.7,347.3 759.6,339.2 762.4,340.5 764.6,370.6 766.7,363.4 772.6,350.5 775.3,347.3 779.5,341.5 783.4,341.5 785.2,377.8 787.9,378.7 792.4,386.7 796.9,381.4 798.3,376.0 799.6,382.3 803.1,376.9 804.4,383.2 808.5,370.6 810.9,369.7 811.6,382.3 813.6,368.8 817.2,367.4 821.7,354.1 824.3,353.6 827.6,349.4 831.5,376.9 833.0,343.7 835.1,340.5 837.3,384.1 840.9,371.5 842.3,379.6 844.1,376.9 845.9,382.3 847.7,384.1 851.6,377.8 855.7,360.7 859.3,361.6 862.9,354.1 865.6,352.7 869.6,346.9 873.1,344.6 874.6,383.2 876.7,378.7 878.2,383.2 881.7,381.7 883.5,374.2 888.9,362.5 892.5,359.5 896.1,353.6 898.3,348.2 899.7,349.1 900.6,376.9 902.4,382.8 904.2,373.3 906.9,370.6 909.6,361.6 911.8,377.8 914.5,368.8 917.5,385.0 920.8,382.8 924.4,376.9 927.0,384.1 929.7,376.9 932.4,382.3 936.0,373.3 938.7,383.2 943.7,372.1 945.9,379.6 947.7,376.0 949.5,383.2 952.7,373.3 954.9,372.4 959.3,359.0 962.0,357.7 965.6,351.8 970.1,349.1 970.6,380.5 971.0,349.1 973.7,347.3 980.0,341.9 982.7,341.9 987.2,337.4 989.9,338.0 992.5,335.6 994.3,376.0 999.7,355.4 1001.5,377.8 1006.0,365.2 1008.3,385.0 1010.5,381.4" fill="none" stroke="#6d9db6" stroke-width="1.15" stroke-linejoin="round"/>
<line x1="375.6" y1="320.3" x2="375.6" y2="392.3" stroke="#888" stroke-width="0.9"/>
<line x1="375.6" y1="392.3" x2="1011.0" y2="392.3" stroke="#777" stroke-width="1.3"/>
</svg>

<div class="a" style="left:1002px;top:439px;width:22px;height:18px;background:#e6e6e6"></div>
<div class="a" style="left:1007.5px;top:443.6px;width:10.6px;height:10.6px;background:#2a9bc0;border-radius:50%"></div>
<svg class="a" style="left:1007.5px;top:443.6px" width="10.6" height="10.6" viewBox="0 0 10.6 10.6"><path d="M1.5 6 L3.5 3.5 L5 6 L7 3.5 L9 6" stroke="#e8f6fb" stroke-width="1.1" fill="none"/><path d="M2 7.5 L4 5 L6 7.5 L8.5 4.5" stroke="#bfe6f2" stroke-width="0.8" fill="none"/></svg>
</body></html>
